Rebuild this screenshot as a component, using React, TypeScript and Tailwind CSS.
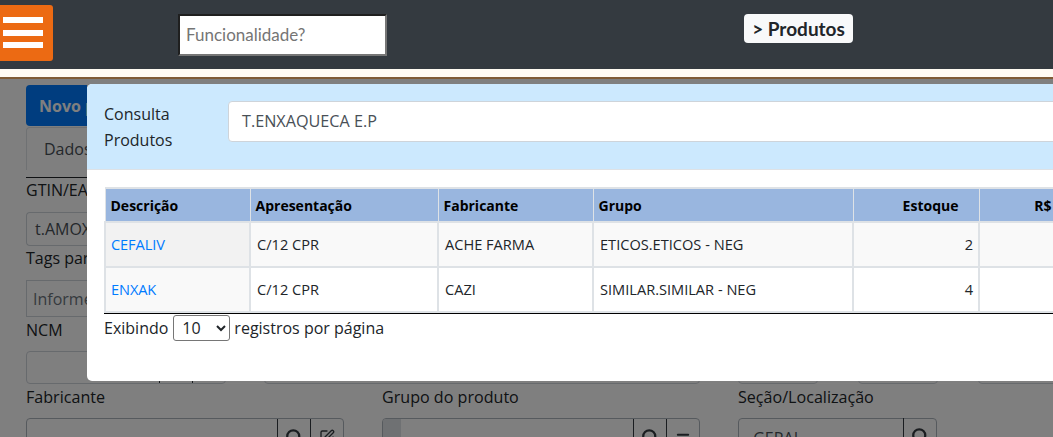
import { Search, SquarePen, Equal } from "lucide-react";

const sans = "font-['Open_Sans','Noto_Sans',sans-serif]";

function Row({ link, a, b, c, n, first, rest }: { link: string; a: string; b: string; c: string; n: string; first: string; rest: string }) {
  const td = "border-2 border-[#dee2e6] pl-[6px] pr-[5px] align-middle font-normal";
  return (
    <tr className="h-[45px] text-[14.6px] text-[#212529]">
      <td className={`border-2 border-[#dee2e6] pl-[5px] align-middle font-normal tracking-[-0.1px] ${first} text-[#007bff]`}>{link}</td>
      <td className={`${td} ${rest}`}>{a}</td>
      <td className={`${td} ${rest}`}>{b}</td>
      <td className={`${td} ${rest}`}>{c}</td>
      <td className={`${td} ${rest} text-right`}>{n}</td>
      <td className={`${td} ${rest}`}></td>
    </tr>
  );
}

function Field({ label, children }: { label: string; children: React.ReactNode }) {
  return (
    <div>
      <div className="h-[21px] text-[16.1px] leading-[21px] text-[#212529]">{label}</div>
      <div className="mt-[10px]">{children}</div>
    </div>
  );
}

function AddOn({ children }: { children: React.ReactNode }) {
  return <div className="flex h-[36px] w-[33px] shrink-0 items-center justify-center border-l border-[#343a40] text-[#343a40]">{children}</div>;
}

export default function App() {
  const th = "border-2 border-[#dee2e6] border-x-[1px] px-[5px] text-left font-bold";
  return (
    <div className={`${sans} relative h-[437px] w-[1053px] overflow-hidden bg-white`}>
      {/* top bar */}
      <header className="flex h-[69px] items-start bg-[#343a40] font-['Lato',sans-serif]">
        <div className="mt-[5px] flex h-[56px] w-[53px] flex-col gap-[6.5px] rounded-r-[3px] bg-[#ec6a13] pl-[3px] pt-[12px]">
          <div className="h-[6px] w-[40px] bg-white" />
          <div className="h-[6px] w-[40px] bg-white" />
          <div className="h-[6px] w-[40px] bg-white" />
        </div>
        <input
          readOnly
          placeholder="Funcionalidade?"
          className="ml-[125px] mt-[14px] h-[42px] w-[209px] border-2 border-b-[#767676] border-l-[#1f1f1f] border-r-[#767676] border-t-[#1f1f1f] bg-white pb-[2px] pl-[6px] text-[17px] text-[#757575] placeholder:text-[#757575]"
        />
        <div className="ml-[357px] mt-[14px] flex h-[29px] w-[109px] items-center justify-center rounded-[4px] bg-[#f8f9fa] pt-[1px] text-[19px] font-bold text-[#212529]">
          &gt; Produtos
        </div>
      </header>
      <div className="h-[8px] bg-[#fffbf3]" />
      <div className="h-[2px] bg-[#7f5b35]" />

      {/* page behind the dialog */}
      <main className="px-[26px] pt-[6px]">
        <div className="flex h-[41px] w-[61px] items-center overflow-hidden whitespace-nowrap rounded-l-[4px] bg-[#007bff] pl-[13px] text-[16px] font-bold text-white">Novo produto</div>
        <div className="mt-[1px] flex h-[43px] w-[200px] items-center rounded-t-[4px] border border-b-0 border-[#dee2e6] px-[17px] text-[16px] text-[#495057]">Dados</div>
        <div className="mt-[7px] h-px bg-[#212529]" />
        <div className="mt-[2px] h-[21px] text-[16px] leading-[21px] text-[#212529]">GTIN/EAN</div>
        <div className="mt-[11px] flex h-[34px] w-[61px] items-center overflow-hidden whitespace-nowrap rounded-l-[4px] border border-r-0 border-[#ced4da] bg-white pl-[8px] text-[16px] text-[#495057]">t.AMOXICILINA</div>
        <div className="mt-[2px] h-[21px] text-[16px] leading-[21px] text-[#212529]">Tags para</div>
        <div className="mt-[11px] flex h-[37px] w-[200px] items-center border border-[#ced4da] bg-white px-[6px] text-[16px] text-[#6c757d]">Informe</div>
        <div className="mt-[3px] h-[21px] text-[16px] leading-[21px] text-[#212529]">NCM</div>
        <div className="mt-[10px] flex h-[33px] gap-[38px]">
          <div className="flex w-[200px] shrink-0 justify-end rounded-[4px] border border-[#ced4da] bg-white">
            <div className="w-[33px] border-l border-[#343a40]" />
            <div className="w-[33px] border-l border-[#343a40]" />
          </div>
          <div className="w-[436px] shrink-0 rounded-[4px] border border-[#ced4da] bg-white" />
          <div className="w-[80px] shrink-0 rounded-[4px] border border-[#ced4da] bg-white" />
          <div className="ml-[2px] w-[80px] shrink-0 rounded-[4px] border border-[#ced4da] bg-white" />
          <div className="ml-[2px] w-[80px] shrink-0 rounded-[4px] border border-[#ced4da] bg-white" />
        </div>
        <div className="mt-[3px] grid grid-cols-[356px_356px_300px]">
          <Field label="Fabricante">
            <div className="flex h-[36px] w-[318px] justify-end rounded-[4px] border border-[#adb5bd] bg-white">
              <AddOn><Search size={18} strokeWidth={3} /></AddOn>
              <AddOn><SquarePen size={16} /></AddOn>
            </div>
          </Field>
          <Field label="Grupo do produto">
            <div className="flex h-[36px] w-[318px] overflow-hidden rounded-[4px] border border-[#adb5bd] bg-white">
              <div className="w-[18px] shrink-0 bg-[#dee2e6]" />
              <div className="flex-1" />
              <AddOn><Search size={18} strokeWidth={3} /></AddOn>
              <AddOn><Equal size={18} strokeWidth={2.5} /></AddOn>
            </div>
          </Field>
          <Field label="Seção/Localização">
            <div className="flex h-[36px] w-[199px] items-center justify-between rounded-[4px] border border-[#adb5bd] bg-white pl-[9px] text-[16px] text-[#495057]">
              <span className="pt-[3px]">-GERAL-</span>
              <AddOn><Search size={18} strokeWidth={3} /></AddOn>
            </div>
          </Field>
        </div>
      </main>

      {/* backdrop */}
      <div className="absolute inset-x-0 bottom-0 top-[79px] bg-black/50" />

      {/* dialog */}
      <div className="absolute left-[87px] top-[84px] h-[297px] w-[1010px] overflow-hidden rounded-[5px] bg-white">
        <div className="flex h-[86px] items-start border-b border-[#dee2e6] bg-[#cce9fe] pl-[17px] pt-[17px]">
          <div className="w-[124px] text-[16px] leading-[26px] text-[#212529]">Consulta<br />Produtos</div>
          <div className="flex h-[41px] flex-1 items-center rounded-[4px] border border-[#ced4da] bg-white px-[13px] text-[16.2px] text-[#495057]">T.ENXAQUECA E.P</div>
        </div>
        <div className="pl-[17px] pt-[17px]">
          <table className="w-[960px] table-fixed border-collapse">
            <colgroup>
              <col className="w-[145px]" />
              <col className="w-[188px]" />
              <col className="w-[155px]" />
              <col className="w-[260px]" />
              <col className="w-[126px]" />
              <col className="w-[86px]" />
            </colgroup>
            <thead>
              <tr className="h-[34px] bg-[#99b6df] text-[14px] text-[#000]">
                <th className={th}>Descrição</th>
                <th className={th}>Apresentação</th>
                <th className={th}>Fabricante</th>
                <th className={th}>Grupo</th>
                <th className={`${th} pr-[20px] text-right`}>Estoque</th>
                <th className={`${th} pr-[13px] text-right`}>R$</th>
              </tr>
            </thead>
            <tbody>
              <Row link="CEFALIV" a="C/12 CPR" b="ACHE FARMA" c="ETICOS.ETICOS - NEG" n="2" first="bg-[#f2f2f2]" rest="bg-[#f9f9f9]" />
              <Row link="ENXAK" a="C/12 CPR" b="CAZI" c="SIMILAR.SIMILAR - NEG" n="4" first="bg-[#f9f9f9]" rest="bg-white" />
            </tbody>
          </table>
          <div className="h-px bg-black" />
          <div className="mt-[1px] flex h-[26px] items-center text-[16px] text-[#212529]">
            Exibindo
            <select className="ml-[5px] mr-[4px] h-[26px] w-[57px] rounded-[3px] border border-[#767676] bg-white pl-[4px] text-[16px]" defaultValue="10">
              <option>10</option>
            </select>
            registros por página
          </div>
        </div>
      </div>
    </div>
  );
}
